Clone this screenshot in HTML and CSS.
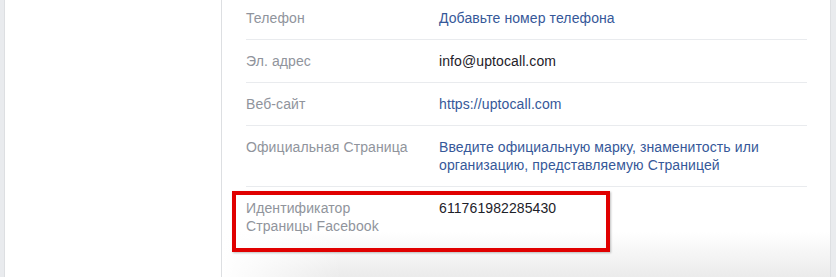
FILE: index.html
```html
<!DOCTYPE html>
<html>
<head>
    <meta name="viewport" content="width=device-width, initial-scale=1">
    <link rel="stylesheet" href="styles.css">
</head>
<body>
    <div class="page">
        <div class="sidebar"></div>
        <div class="main">
            <div class="row first">
                <div class="label">Телефон</div>
                <div class="value link">Добавьте номер телефона</div>
            </div>
            <div class="row">
                <div class="label">Эл. адрес</div>
                <div class="value">info@uptocall.com</div>
            </div>
            <div class="row">
                <div class="label">Веб-сайт</div>
                <div class="value link">https://uptocall.com</div>
            </div>
            <div class="row">
                <div class="label">Официальная Страница</div>
                <div class="value link">Введите официальную марку, знаменитость или организацию, представляемую Страницей</div>
            </div>
            <div class="row last">
                <div class="label">Идентификатор<br>Страницы Facebook</div>
                <div class="value">611761982285430</div>
                <div class="highlight"></div>
            </div>
        </div>
    </div>
</body>
</html>
```

FILE: styles.css
```css
html, body {
    margin: 0;
    padding: 0;
    height: 100%;
    background-color: #e9ebee;
    font-family: 'Liberation Sans', Helvetica, Arial, sans-serif;
    font-size: 14px;
    line-height: 18px;
    letter-spacing: 0.1px;
}

.page {
    display: flex;
    height: 277px;
    margin: 0 5px 0 4px;
    border-left: 1px solid #dddfe2;
    border-right: 1px solid #dddfe2;
    background-color: #fff;
    overflow: hidden;
}

.sidebar {
    width: 216px;
    border-right: 1px solid #dddfe2;
}

.main {
    flex: 1;
    padding: 0 23px 0 24px;
    background: linear-gradient(to right, #fff 0, rgba(255, 255, 255, 0) 120px),
        linear-gradient(to bottom, #fff 0, #fff 232px, #ebebeb 277px);
}

.row {
    position: relative;
    display: flex;
    padding: 12px 0;
    border-bottom: 1px solid #e9ebee;
}

.row.first {
    padding-top: 9px;
}

.row.last {
    border-bottom: none;
}

.label {
    width: 193px;
    flex-shrink: 0;
    color: #90949c;
}

.value {
    color: #1d2129;
    width: 345px;
}

.link {
    color: #365899;
}

.highlight {
    position: absolute;
    left: -14px;
    top: 4px;
    width: 370px;
    height: 53px;
    border: 4px solid #e00000;
    box-shadow: 1px 1px 2px rgba(0, 0, 0, 0.25);
}
```
